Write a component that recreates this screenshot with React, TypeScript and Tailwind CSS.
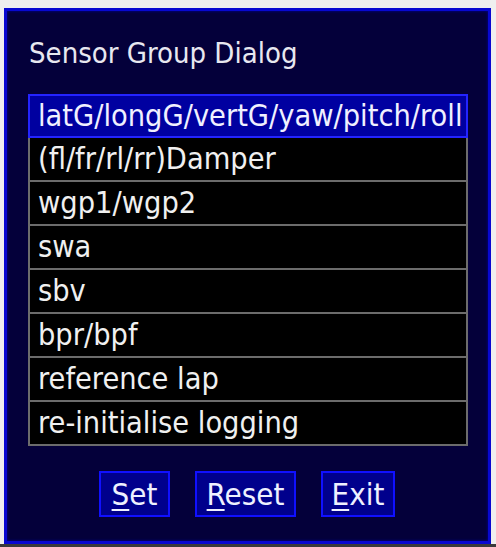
import React from "react";

const rows = [
  "latG/longG/vertG/yaw/pitch/roll",
  "(fl/fr/rl/rr)Damper",
  "wgp1/wgp2",
  "swa",
  "sbv",
  "bpr/bpf",
  "reference lap",
  "re-initialise logging",
];

function Btn({ first, rest, w }: { first: string; rest: string; w: string }) {
  return (
    <div
      className={`${w} h-[46px] flex items-center justify-center border-2 border-[#1010ff] bg-[#00008c] text-[#eef0ff] text-[31px] leading-none`}
    >
      <span>
        <span className="underline underline-offset-[4px] decoration-2">{first}</span>
        {rest}
      </span>
    </div>
  );
}

export default function App() {
  return (
    <div
      className="w-[496px] h-[547px] bg-[#efefef] pt-[8px] pl-[4px] border-b-[3px] border-[#3a3a3a]"
      style={{ fontFamily: '"DejaVu Sans Condensed", "DejaVu Sans", sans-serif' }}
    >
      <div className="w-[487px] h-[536px] border-[3px] border-[#0808d0] bg-[#04003a] shadow-[inset_0_0_3px_#0000a0] flex flex-col">
        <div className="pl-[22px] pt-[28px] h-[83px] text-[29px] leading-none text-[#e8e8f0]">
          Sensor Group Dialog
        </div>
        <div className="ml-[21px] w-[440px] flex flex-col">
          {rows.map((r, i) =>
            i === 0 ? (
              <div
                key={r}
                className="h-[44px] flex items-center pl-[8px] border-2 border-[#2424ff] bg-[#0000a0] text-[#f0f0ff] text-[30.4px] leading-none whitespace-nowrap overflow-hidden"
              >
                {r}
              </div>
            ) : (
              <div
                key={r}
                className="h-[44px] flex items-center pl-[8px] border-x-2 border-b-2 border-[#6c6c6c] bg-black text-[#f0f0f0] text-[30.4px] leading-none whitespace-nowrap"
              >
                {r}
              </div>
            )
          )}
        </div>
        <div className="mt-[25px] flex justify-center gap-[25px] pr-[1px]">
          <Btn first="S" rest="et" w="w-[71px]" />
          <Btn first="R" rest="eset" w="w-[101px]" />
          <Btn first="E" rest="xit" w="w-[74px]" />
        </div>
      </div>
    </div>
  );
}
